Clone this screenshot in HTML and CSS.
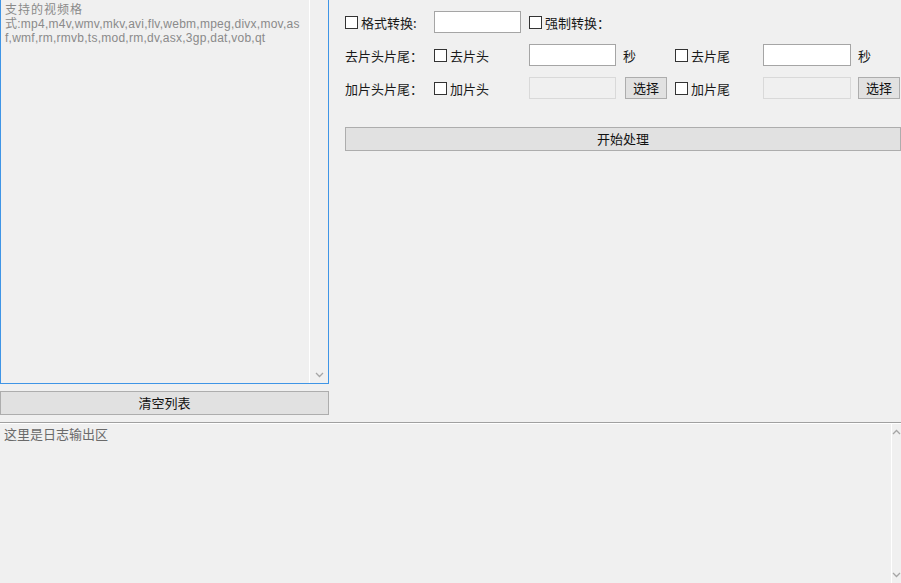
FILE: index.html
```html
<!DOCTYPE html>
<html lang="zh-CN">
<head>
    <meta charset="UTF-8">
    <title>视频批量处理</title>
    <link rel="stylesheet" href="styles.css">
</head>
<body>
    <div class="app">
        <div class="top">
            <div class="left">
                <div class="filelist">
                    <div class="filelist-text">
                        <div class="line line-cjk">支持的视频格</div>
                        <div class="line">式:mp4,m4v,wmv,mkv,avi,flv,webm,mpeg,divx,mov,as</div>
                        <div class="line">f,wmf,rm,rmvb,ts,mod,rm,dv,asx,3gp,dat,vob,qt</div>
                    </div>
                    <div class="vscroll">
                        <svg class="arrow arrow-down" width="9" height="6" viewBox="0 0 9 6"><path d="M1 1 L4.5 4.5 L8 1" fill="none" stroke="#a6a6a6" stroke-width="1.3"/></svg>
                    </div>
                </div>
                <button class="btn btn-clear">清空列表</button>
            </div>
            <div class="right">
                <div class="opts">
                    <label class="chk"><span class="box"></span>格式转换:</label>
                    <input class="field" type="text">
                    <label class="chk rest"><span class="box"></span>强制转换：</label>

                    <span class="lbl">去片头片尾：</span>
                    <label class="chk"><span class="box"></span>去片头</label>
                    <input class="field" type="text">
                    <span class="unit">秒</span>
                    <label class="chk"><span class="box"></span>去片尾</label>
                    <input class="field field-wide" type="text">
                    <span class="unit">秒</span>

                    <span class="lbl">加片头片尾：</span>
                    <label class="chk"><span class="box"></span>加片头</label>
                    <input class="field" type="text" disabled>
                    <span><button class="btn btn-pick">选择</button></span>
                    <label class="chk"><span class="box"></span>加片尾</label>
                    <input class="field field-wide" type="text" disabled>
                    <span><button class="btn btn-pick btn-pick2">选择</button></span>
                </div>
                <button class="btn btn-start">开始处理</button>
            </div>
        </div>
        <div class="log">
            <div class="log-text">这里是日志输出区</div>
            <div class="vscroll log-scroll">
                <svg class="arrow" width="9" height="6" viewBox="0 0 9 6"><path d="M1 5 L4.5 1.5 L8 5" fill="none" stroke="#a6a6a6" stroke-width="1.3"/></svg>
                <svg class="arrow" width="9" height="6" viewBox="0 0 9 6"><path d="M1 1 L4.5 4.5 L8 1" fill="none" stroke="#a6a6a6" stroke-width="1.3"/></svg>
            </div>
        </div>
    </div>
</body>
</html>
```
FILE: styles.css
```css
body {
    margin: 0;
    background-color: #f0f0f0;
    font-family: "Noto Sans CJK SC", "Microsoft YaHei", sans-serif;
    font-size: 13px;
    color: #1a1a1a;
    overflow: hidden;
}
.app {
    width: 901px;
    height: 583px;
    display: flex;
    flex-direction: column;
}
.top {
    height: 422px;
    display: flex;
}
.left {
    width: 329px;
    display: flex;
    flex-direction: column;
}
.filelist {
    height: 384px;
    border: 1px solid #3f95e6;
    border-top: none;
    display: flex;
    box-sizing: border-box;
}
.filelist-text {
    flex: 1;
    padding: 3px 4px;
    color: #8a8a8a;
    font-family: "Liberation Sans", "Noto Sans CJK SC", sans-serif;
    font-size: 12px;
    white-space: nowrap;
    overflow: hidden;
}
.line {
    height: 14px;
    line-height: 14px;
    letter-spacing: 0.25px;
}
.line-cjk {
    letter-spacing: 1px;
}
.vscroll {
    width: 18px;
    border-left: 1px solid #ffffff;
    display: flex;
    flex-direction: column;
    justify-content: flex-end;
    align-items: center;
}
.arrow {
    display: block;
}
.arrow-down {
    margin-bottom: 5px;
}
.btn {
    font-family: "Noto Sans CJK SC", sans-serif;
    font-size: 13px;
    color: #111;
    background-color: #e1e1e1;
    border: 1px solid #adadad;
    padding: 0;
    line-height: 20px;
    box-sizing: border-box;
}
.btn-clear {
    margin-top: 7px;
    width: 329px;
    height: 24px;
}
.right {
    flex: 1;
    padding: 11px 0 0 16px;
}
.opts {
    display: grid;
    grid-template-columns: 89px 95px 87px 59px 88px 88px 1fr;
    grid-auto-rows: 22px;
    row-gap: 11px;
    align-items: center;
}
.chk {
    display: flex;
    align-items: center;
    white-space: nowrap;
}
.rest {
    grid-column: span 5;
}
.box {
    width: 11px;
    height: 11px;
    border: 1px solid #333;
    background: #fff;
    margin-right: 3px;
}
.lbl {
    white-space: nowrap;
}
.field {
    width: 87px;
    height: 22px;
    box-sizing: border-box;
    border: 1px solid #a5a5a5;
    background: #fff;
    margin: 0;
    padding: 0 2px;
}
.field-wide {
    width: 88px;
}
.field:disabled {
    background: #f0f0f0;
    border-color: #d9d9d9;
}
.unit {
    padding-left: 7px;
}
.btn-pick {
    margin-left: 9px;
    width: 42px;
    height: 22px;
}
.btn-pick2 {
    margin-left: 7px;
}
.btn-start {
    margin-top: 28px;
    width: 556px;
    height: 24px;
}
.log {
    flex: 1;
    display: flex;
    border-top: 1px solid #a0a0a0;
    box-shadow: inset 0 1px 0 #ffffff;
}
.log-text {
    flex: 1;
    padding: 3px 4px;
    color: #6a6a6a;
    font-size: 13px;
    line-height: 16px;
}
.log-scroll {
    width: 9px;
    justify-content: space-between;
    padding: 6px 0 5px;
}
```
